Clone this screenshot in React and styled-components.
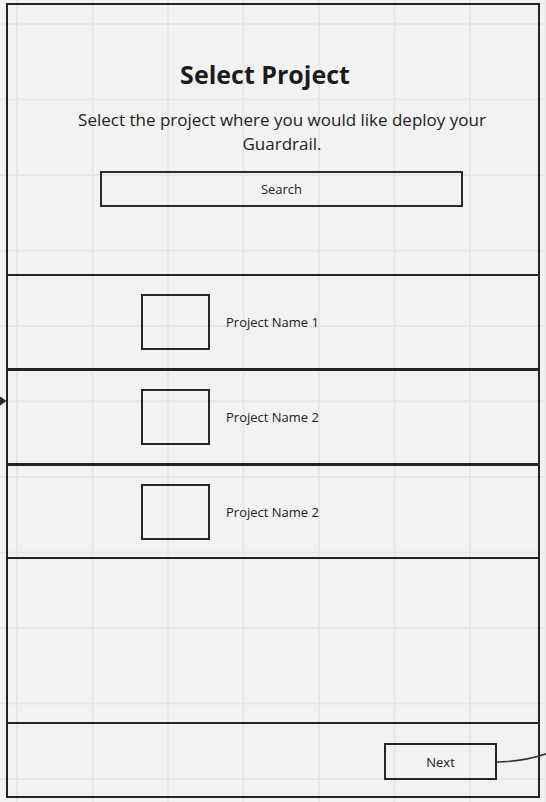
import React from "react";
import styled, { createGlobalStyle } from "styled-components";

const Global = createGlobalStyle`
  html, body {
    margin: 0;
    padding: 0;
    background-color: #f2f2f2;
    background-image:
      linear-gradient(to right, #e7e7e7 2px, transparent 2px),
      linear-gradient(to bottom, #e7e7e7 2px, transparent 2px);
    background-size: 75.5px 75.5px;
    background-position: 16px 23px;
    font-family: "Open Sans", "Noto Sans", sans-serif;
    color: #222;
  }
`;

const Canvas = styled.div`
  position: relative;
  width: 546px;
  height: 802px;
  padding: 3px 0 0 6px;
  box-sizing: border-box;
  overflow: hidden;
`;

const Frame = styled.div`
  width: 534px;
  height: 795px;
  box-sizing: border-box;
  border: 2px solid #232323;
  display: flex;
  flex-direction: column;
`;

const Header = styled.div`
  height: 269px;
  border-bottom: 2px solid #232323;
  display: flex;
  flex-direction: column;
  align-items: center;
  flex-shrink: 0;
`;

const Title = styled.h1`
  margin: 52px 16px 0 0;
  font-size: 25px;
  line-height: 34px;
  font-weight: 700;
  color: #1c1c1c;
`;

const Subtitle = styled.p`
  margin: 17px 0 0 18px;
  width: 440px;
  text-align: center;
  font-size: 17px;
  line-height: 24px;
  color: #222;
`;

const SearchBox = styled.div`
  margin: 15px 0 0 17px;
  width: 363px;
  height: 36px;
  box-sizing: border-box;
  border: 2px solid #2a2a2a;
  display: flex;
  align-items: center;
  justify-content: center;
  font-size: 13px;
  color: #222;
`;

const Row = styled.div`
  height: ${(p) => p.$h}px;
  border-bottom: ${(p) => p.$line}px solid #232323;
  display: flex;
  align-items: center;
  padding-left: 133px;
  gap: 16px;
  flex-shrink: 0;
`;

const Thumb = styled.div`
  width: 69px;
  height: 56px;
  box-sizing: border-box;
  border: 2px solid #262626;
`;

const RowLabel = styled.span`
  font-size: 13px;
  color: #222;
`;

const Spacer = styled.div`
  flex: 1;
`;

const Footer = styled.div`
  height: 74px;
  box-sizing: border-box;
  border-top: 2px solid #232323;
  display: flex;
  align-items: center;
  justify-content: flex-end;
  padding: 3px 41px 0 0;
  flex-shrink: 0;
`;

const NextButton = styled.div`
  width: 113px;
  height: 37px;
  box-sizing: border-box;
  border: 2px solid #262626;
  display: flex;
  align-items: center;
  justify-content: center;
  font-size: 13px;
  color: #222;
`;

const Overlay = styled.svg`
  position: absolute;
  left: 0;
  top: 0;
  pointer-events: none;
`;

const projects = [
  { name: "Project Name 1", h: 92, line: 3 },
  { name: "Project Name 2", h: 92, line: 3 },
  { name: "Project Name 2", h: 91, line: 2 },
];

export default function App() {
  return (
    <>
      <Global />
      <Canvas>
        <Frame>
          <Header>
            <Title>Select Project</Title>
            <Subtitle>
              Select the project where you would like deploy your Guardrail.
            </Subtitle>
            <SearchBox>Search</SearchBox>
          </Header>
          {projects.map((p, i) => (
            <Row key={i} $h={p.h} $line={p.line}>
              <Thumb />
              <RowLabel>{p.name}</RowLabel>
            </Row>
          ))}
          <Spacer />
          <Footer>
            <NextButton>Next</NextButton>
          </Footer>
        </Frame>
        <Overlay width="546" height="802" viewBox="0 0 546 802">
          <path d="M0 396.5 L6.5 401 L0 405.5 Z" fill="#2a2a2a" />
          <path
            d="M497 762 Q 524 761.5 547 753.5"
            fill="none"
            stroke="#333"
            strokeWidth="1.5"
          />
        </Overlay>
      </Canvas>
    </>
  );
}
